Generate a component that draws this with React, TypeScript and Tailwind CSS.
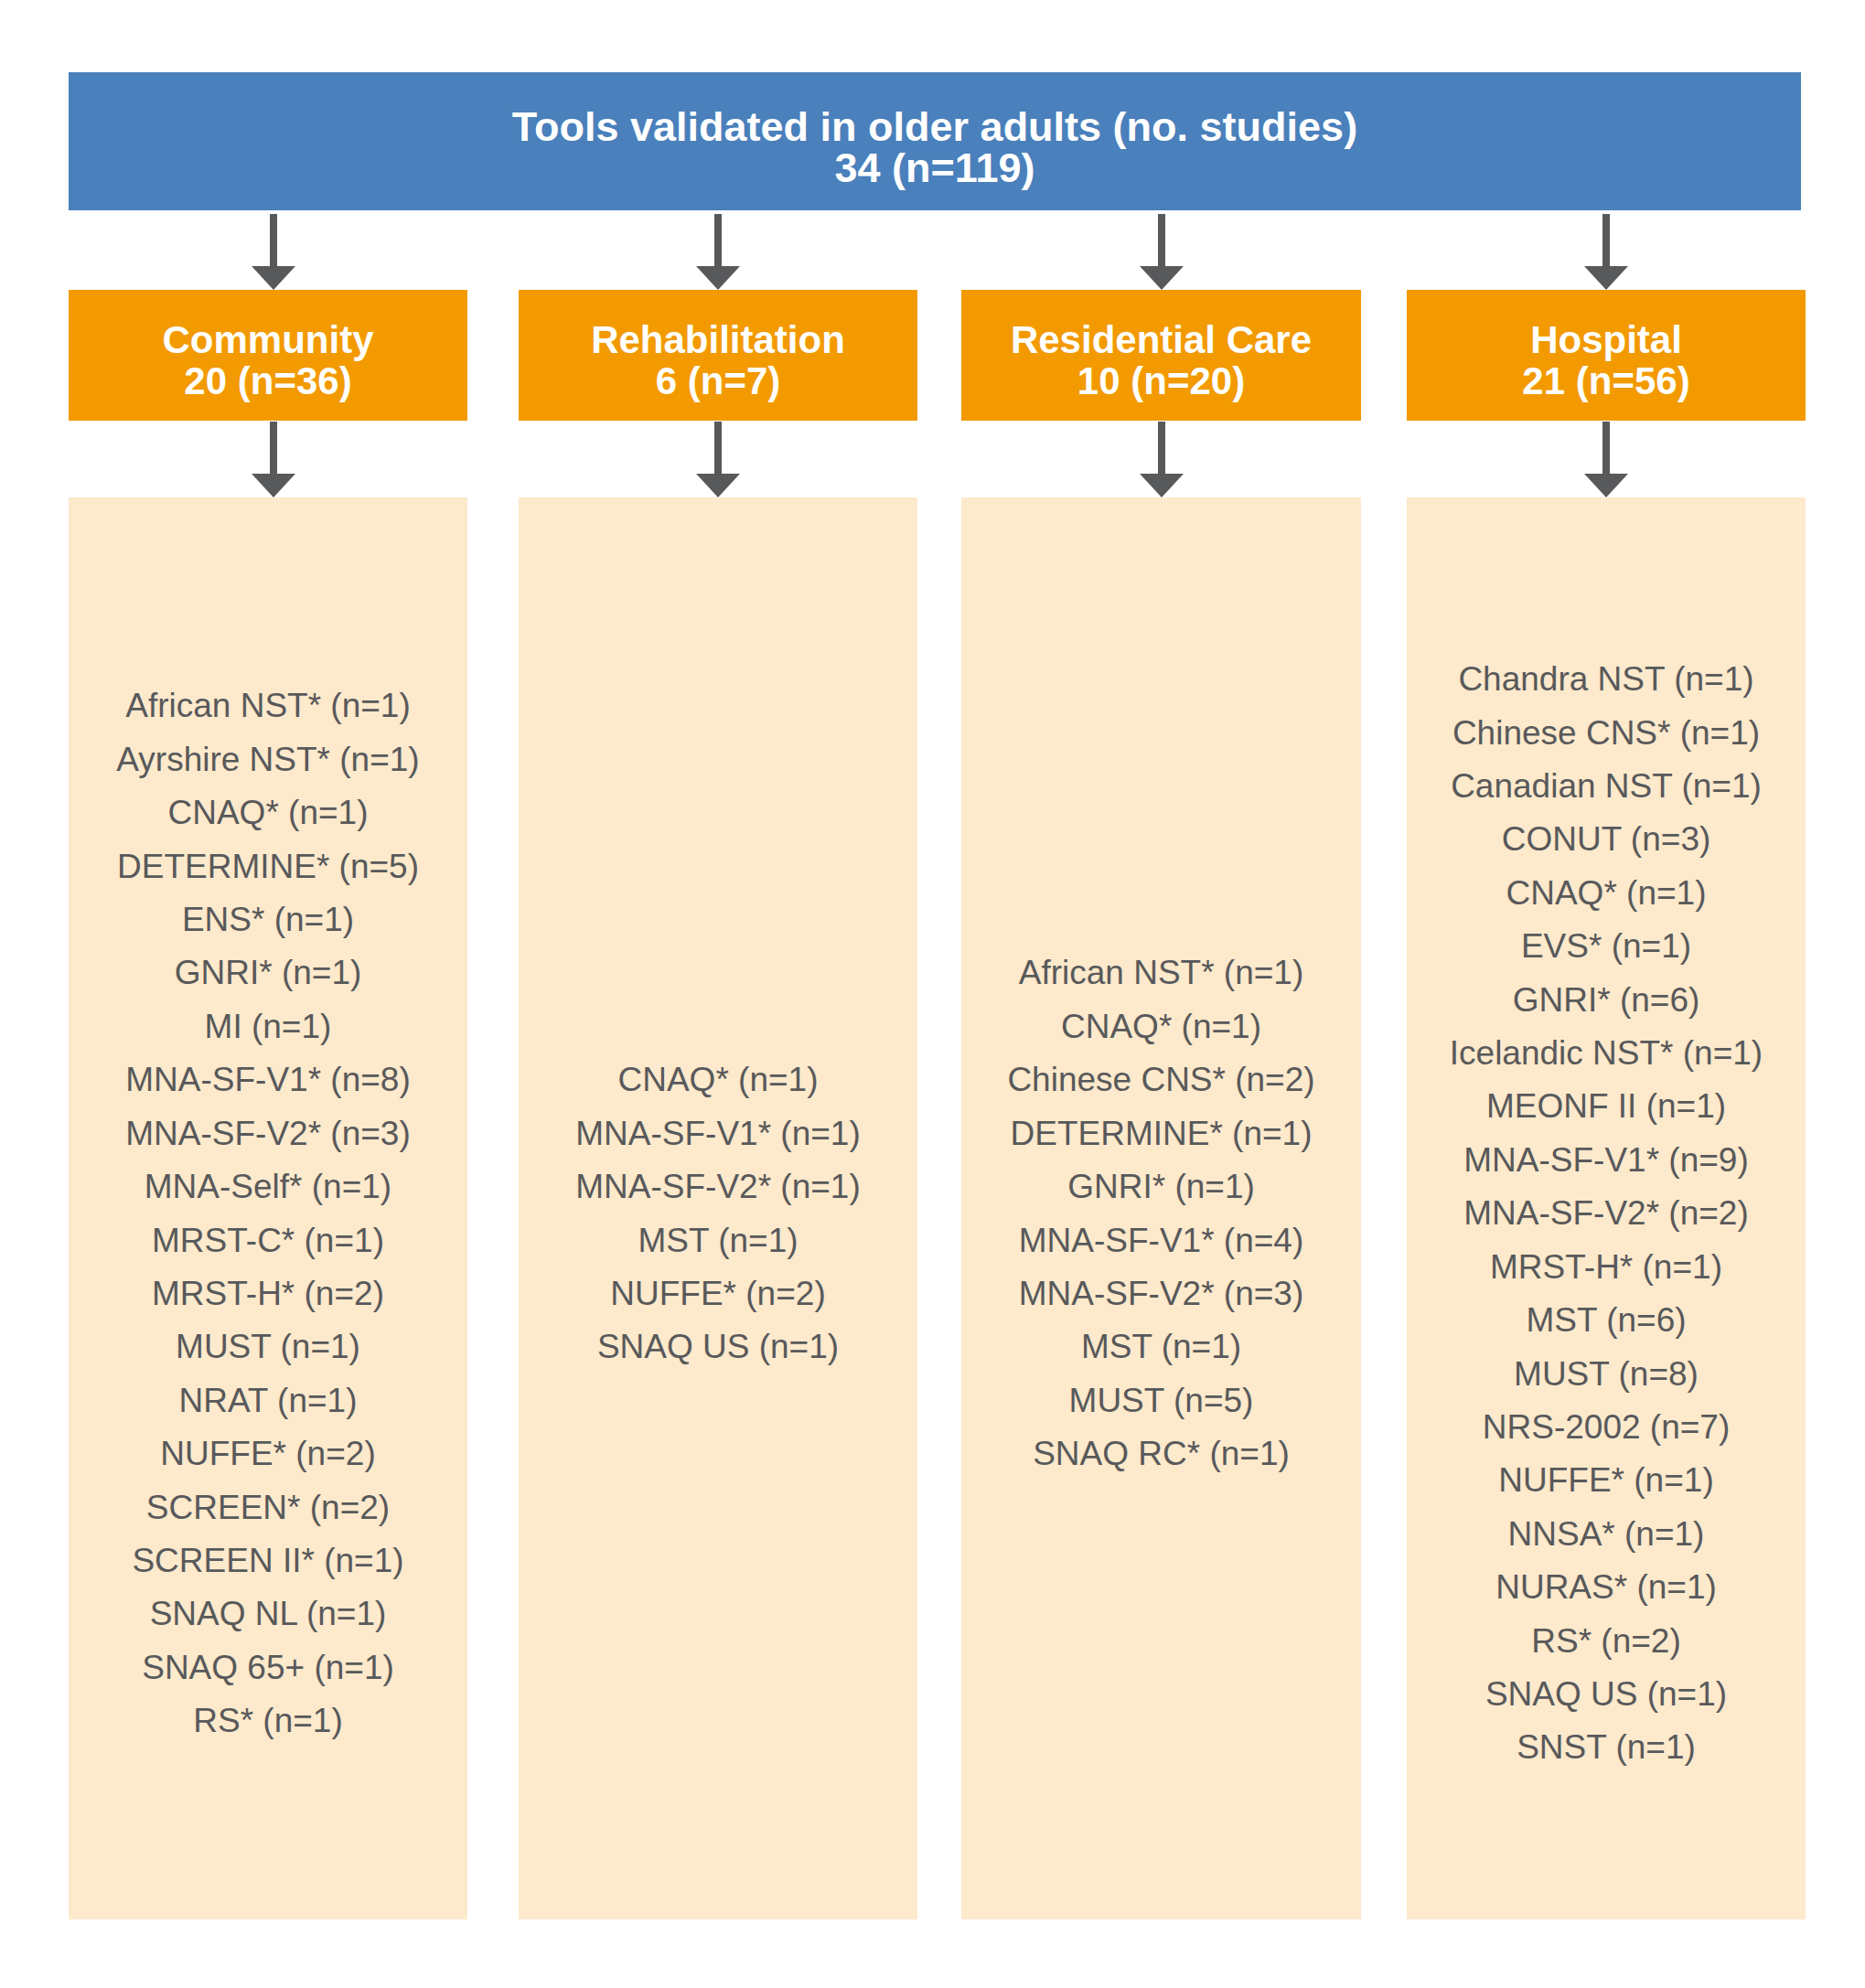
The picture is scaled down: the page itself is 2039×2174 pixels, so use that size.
import React from "react";

type Col = {
  title: string;
  count: string;
  items: string[];
  colClass: string;
  arrowClass: string;
};

const cols: Col[] = [
  {
    title: "Community",
    count: "20 (n=36)",
    colClass: "w-[436px]",
    arrowClass: "ml-[12px]",
    items: [
      "African NST* (n=1)",
      "Ayrshire NST* (n=1)",
      "CNAQ* (n=1)",
      "DETERMINE* (n=5)",
      "ENS* (n=1)",
      "GNRI* (n=1)",
      "MI (n=1)",
      "MNA-SF-V1* (n=8)",
      "MNA-SF-V2* (n=3)",
      "MNA-Self* (n=1)",
      "MRST-C* (n=1)",
      "MRST-H* (n=2)",
      "MUST (n=1)",
      "NRAT (n=1)",
      "NUFFE* (n=2)",
      "SCREEN* (n=2)",
      "SCREEN II* (n=1)",
      "SNAQ NL (n=1)",
      "SNAQ 65+ (n=1)",
      "RS* (n=1)",
    ],
  },
  {
    title: "Rehabilitation",
    count: "6 (n=7)",
    colClass: "w-[436px] ml-[56px]",
    arrowClass: "",
    items: [
      "CNAQ* (n=1)",
      "MNA-SF-V1* (n=1)",
      "MNA-SF-V2* (n=1)",
      "MST (n=1)",
      "NUFFE* (n=2)",
      "SNAQ US (n=1)",
    ],
  },
  {
    title: "Residential Care",
    count: "10 (n=20)",
    colClass: "w-[437px] ml-[48px]",
    arrowClass: "",
    items: [
      "African NST* (n=1)",
      "CNAQ* (n=1)",
      "Chinese CNS* (n=2)",
      "DETERMINE* (n=1)",
      "GNRI* (n=1)",
      "MNA-SF-V1* (n=4)",
      "MNA-SF-V2* (n=3)",
      "MST (n=1)",
      "MUST (n=5)",
      "SNAQ RC* (n=1)",
    ],
  },
  {
    title: "Hospital",
    count: "21 (n=56)",
    colClass: "w-[436px] ml-[50px]",
    arrowClass: "",
    items: [
      "Chandra NST (n=1)",
      "Chinese CNS* (n=1)",
      "Canadian NST (n=1)",
      "CONUT (n=3)",
      "CNAQ* (n=1)",
      "EVS* (n=1)",
      "GNRI* (n=6)",
      "Icelandic NST* (n=1)",
      "MEONF II (n=1)",
      "MNA-SF-V1* (n=9)",
      "MNA-SF-V2* (n=2)",
      "MRST-H* (n=1)",
      "MST (n=6)",
      "MUST (n=8)",
      "NRS-2002 (n=7)",
      "NUFFE* (n=1)",
      "NNSA* (n=1)",
      "NURAS* (n=1)",
      "RS* (n=2)",
      "SNAQ US (n=1)",
      "SNST (n=1)",
    ],
  },
];

function Arrow({ className }: { className: string }) {
  return (
    <div className="flex justify-center h-[83px]">
      <svg
        className={className}
        width="48"
        height="83"
        viewBox="0 0 48 83"
      >
        <rect x="20" y="0" width="8" height="58" fill="#58595b" />
        <polygon points="0,57 48,57 24,83" fill="#58595b" />
      </svg>
    </div>
  );
}

export default function App() {
  return (
    <div className="w-[2039px] h-[2174px] bg-white pt-[79px] pl-[75px] font-['Liberation_Sans',Arial,sans-serif]">
      <div className="w-[1894px] h-[151px] bg-[#4a80bb] flex flex-col items-center justify-center pt-[13px] text-white font-bold text-[45px] leading-[45px]">
        <div>Tools validated in older adults (no. studies)</div>
        <div>34 (n=119)</div>
      </div>
      <div className="flex mt-[4px]">
        {cols.map((c) => (
          <div key={c.title} className={`flex flex-col ${c.colClass}`}>
            <Arrow className={c.arrowClass} />
            <div className="h-[143px] bg-[#f29a00] flex flex-col items-center justify-center pt-[11px] text-white font-bold text-[42px] leading-[45px]">
              <div>{c.title}</div>
              <div>{c.count}</div>
            </div>
            <div className="h-[1px]" />
            <Arrow className={c.arrowClass} />
            <div className="h-[1555px] bg-[#fde9cb] flex flex-col items-center justify-center pt-[12px] text-[#58595b] text-[37px] leading-[58.4px]">
              {c.items.map((it) => (
                <div key={it} className="whitespace-nowrap">
                  {it}
                </div>
              ))}
            </div>
          </div>
        ))}
      </div>
    </div>
  );
}
